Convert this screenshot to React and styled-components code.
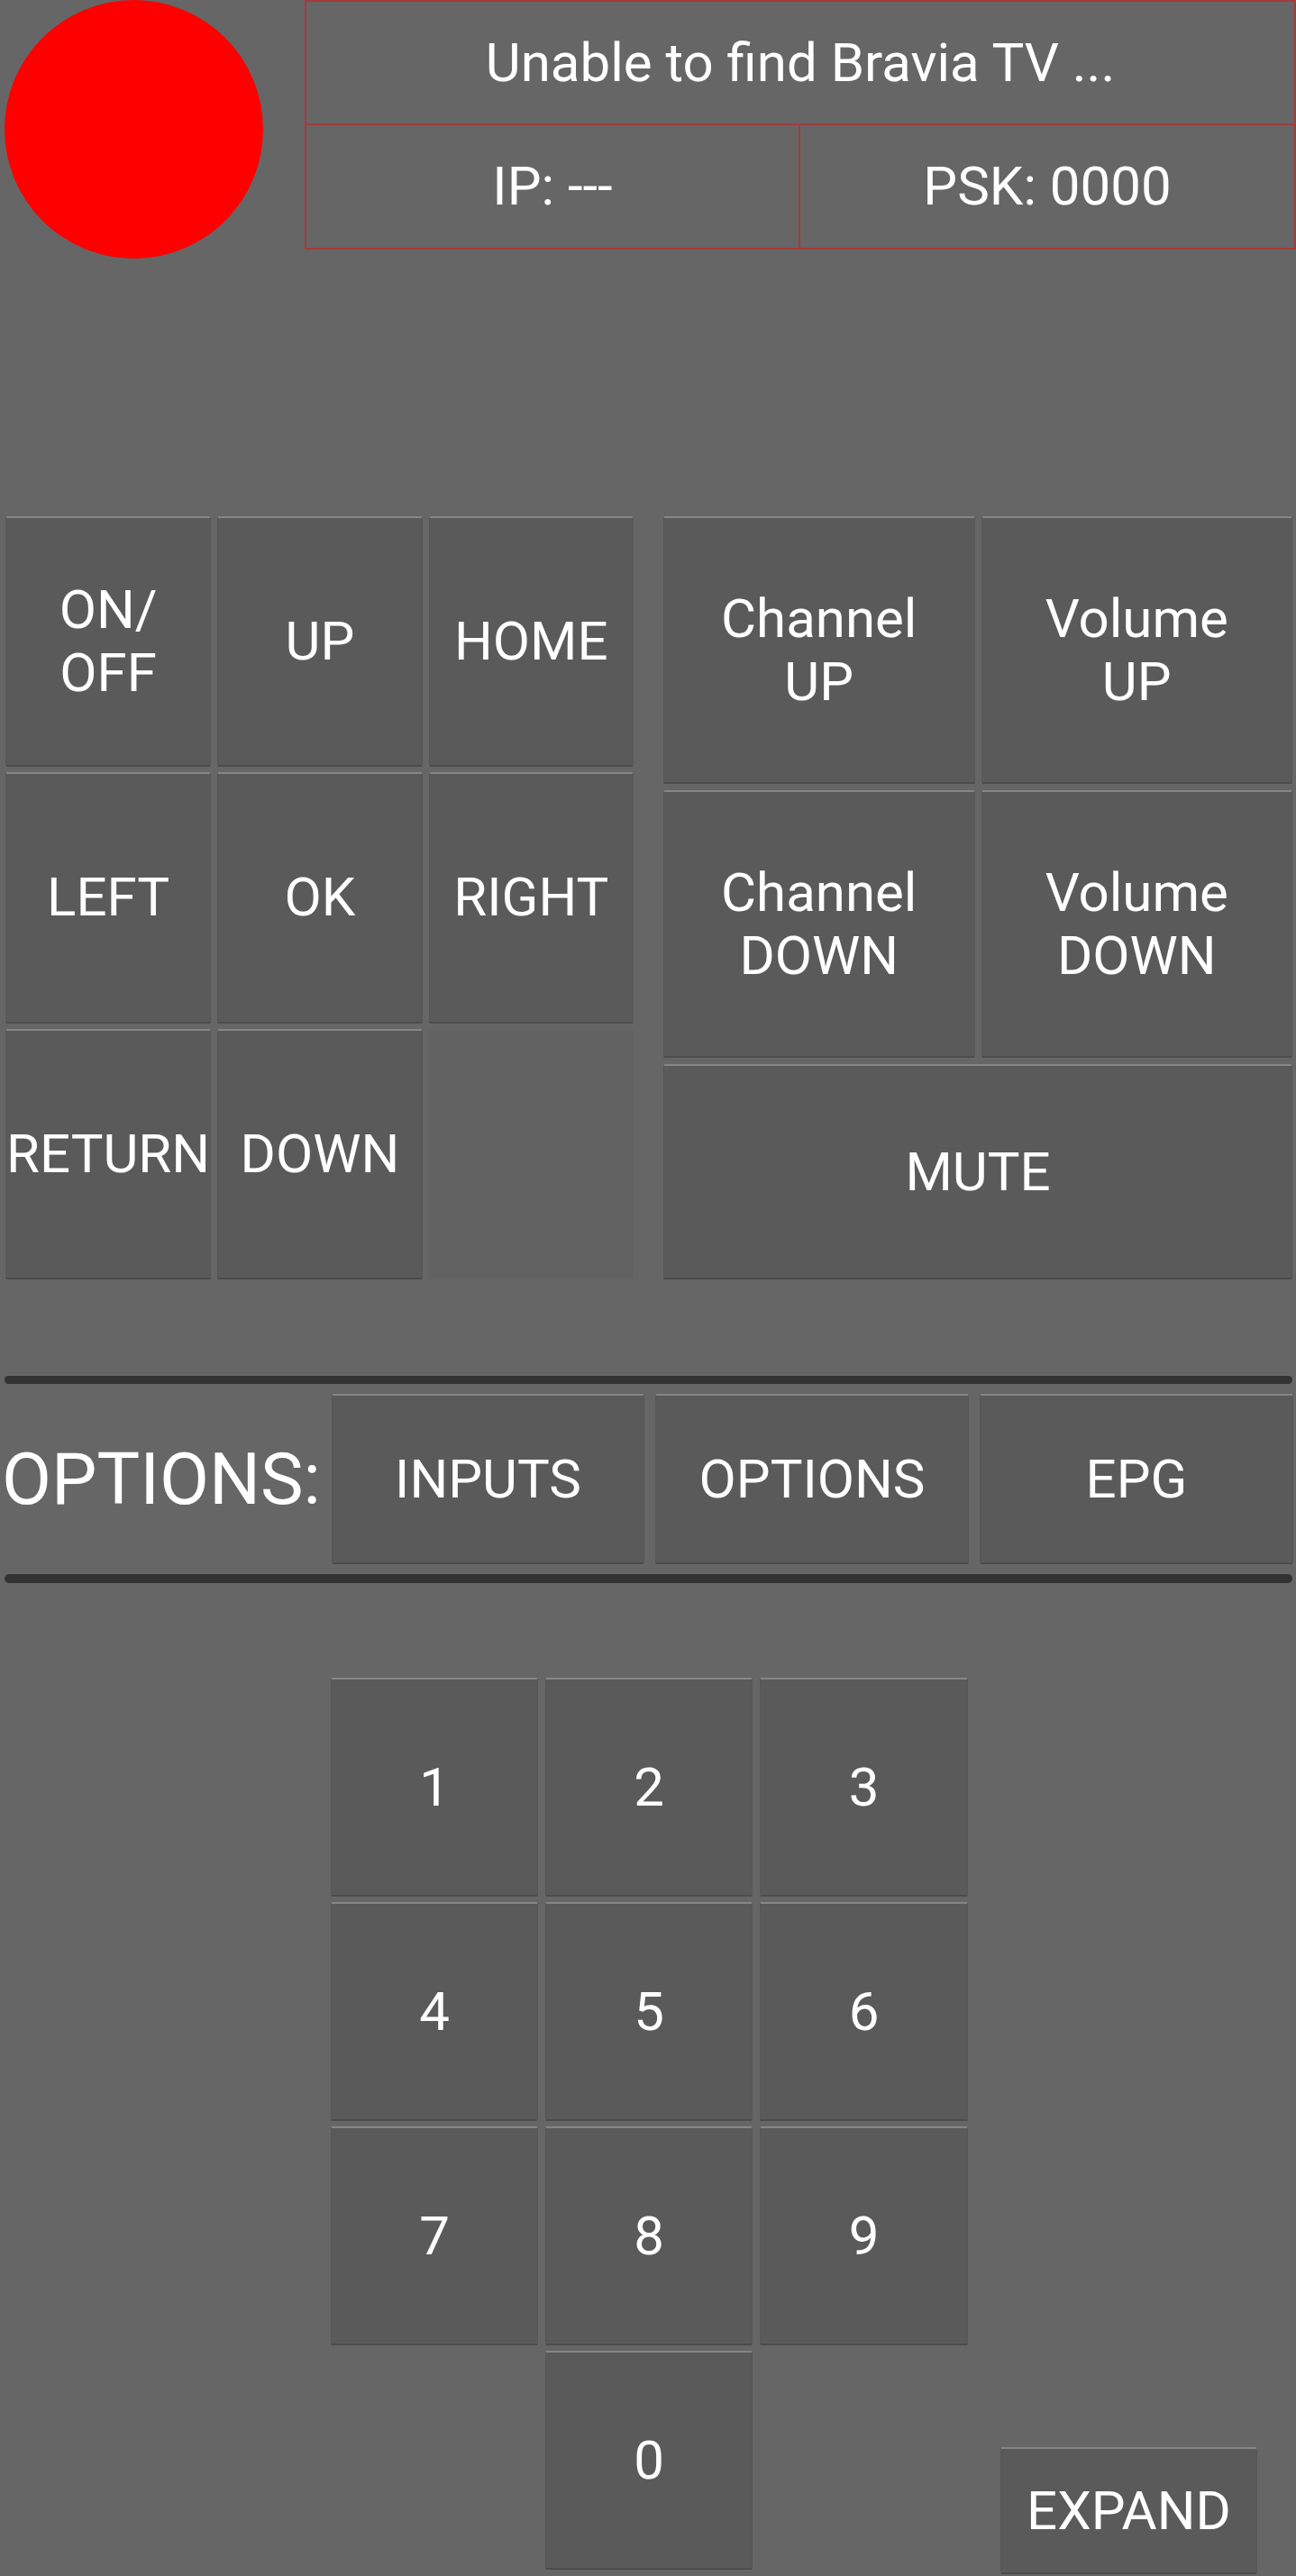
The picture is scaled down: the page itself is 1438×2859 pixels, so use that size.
import React from "react";
import styled, { createGlobalStyle } from "styled-components";

const GlobalStyle = createGlobalStyle`
	html, body {
		margin: 0;
		padding: 0;
		background: #666666;
	}
	body {
		font-family: Roboto, "Liberation Sans", sans-serif;
		color: #ffffff;
	}
	* {
		box-sizing: border-box;
	}
`;

const Screen = styled.div`
	width: 1438px;
	min-height: 2859px;
	background: #666666;
	overflow: hidden;
`;

const Header = styled.div`
	display: flex;
	align-items: flex-start;
	gap: 46px;
	padding-left: 5px;
`;

const StatusLight = styled.div`
	width: 287px;
	height: 287px;
	border-radius: 50%;
	background: #ff0000;
	flex-shrink: 0;
`;

const InfoBox = styled.div`
	width: 1100px;
	height: 277px;
	display: grid;
	grid-template-columns: 1fr 1fr;
	grid-template-rows: 1fr 1fr;
	border: 2px solid #a63a3a;
`;

const InfoCell = styled.div`
	display: flex;
	align-items: center;
	justify-content: center;
	font-size: 60px;
	grid-column: ${p => (p.wide ? "1 / span 2" : "auto")};
	border-bottom: ${p => (p.wide ? "2px solid #a63a3a" : "none")};
	border-right: ${p => (p.divider ? "2px solid #a63a3a" : "none")};
`;

const Controls = styled.div`
	display: flex;
	gap: 33px;
	margin-top: 286px;
	padding-left: 6px;
	height: 847px;
`;

const NavGrid = styled.div`
	width: 697px;
	display: grid;
	grid-template-columns: repeat(3, 1fr);
	grid-template-rows: repeat(3, 1fr);
	column-gap: 7px;
	row-gap: 6px;
`;

const TvGrid = styled.div`
	width: 698px;
	display: grid;
	grid-template-columns: 1fr 1fr;
	grid-template-rows: 297px 297px 1fr;
	gap: 7px;
`;

const Key = styled.button`
	display: flex;
	flex-direction: column;
	align-items: center;
	justify-content: center;
	padding: 0;
	margin: 0;
	background: #5a5a5a;
	color: #ffffff;
	font-family: Roboto, "Liberation Sans", sans-serif;
	font-size: 60px;
	line-height: 70px;
	border: none;
	border-top: 2px solid #868686;
	border-left: 1px solid #575757;
	border-right: 1px solid #575757;
	border-bottom: 2px solid #4c4c4c;
	border-radius: 2px;
	white-space: nowrap;
	grid-column: ${p => (p.span ? `span ${p.span}` : p.col || "auto")};
	grid-row: ${p => p.row || "auto"};
`;

const BlankKey = styled.div`
	background: #626262;
	border-top: 2px solid #656565;
	border-radius: 2px;
`;

const Divider = styled.div`
	height: ${p => p.h || 9}px;
	margin: ${p => p.top}px 4px 0 5px;
	background: #333333;
	border-radius: 5px;
`;

const OptionsRow = styled.div`
	display: grid;
	grid-template-columns: 1fr 347px 348px 348px;
	column-gap: 12px;
	height: 189px;
	margin-top: 11px;
	padding: 0 4px 0 2px;
`;

const OptionsLabel = styled.div`
	display: flex;
	align-items: center;
	font-size: 80px;
	white-space: nowrap;
`;

const Keypad = styled.div`
	display: grid;
	grid-template-columns: 359px 230px 230px 231px 1fr;
	grid-template-rows: repeat(4, 243px);
	column-gap: 8px;
	row-gap: 6px;
	margin-top: 105px;
`;

const ExpandKey = styled(Key)`
	grid-column: 5;
	grid-row: 4;
	justify-self: end;
	align-self: end;
	width: 285px;
	height: 141px;
	margin-right: 43px;
	margin-bottom: -5px;
`;

const Label = ({ lines }) => lines.map(l => <span key={l}>{l}</span>);

const App = () => {
	const digits = ["1", "2", "3", "4", "5", "6", "7", "8", "9"];

	return (
		<Screen>
			<GlobalStyle />
			<Header>
				<StatusLight />
				<InfoBox>
					<InfoCell wide>Unable to find Bravia TV ...</InfoCell>
					<InfoCell divider>IP: ---</InfoCell>
					<InfoCell>PSK: 0000</InfoCell>
				</InfoBox>
			</Header>

			<Controls>
				<NavGrid>
					<Key><Label lines={["ON/", "OFF"]} /></Key>
					<Key>UP</Key>
					<Key>HOME</Key>
					<Key>LEFT</Key>
					<Key>OK</Key>
					<Key>RIGHT</Key>
					<Key>RETURN</Key>
					<Key>DOWN</Key>
					<BlankKey />
				</NavGrid>
				<TvGrid>
					<Key><Label lines={["Channel", "UP"]} /></Key>
					<Key><Label lines={["Volume", "UP"]} /></Key>
					<Key><Label lines={["Channel", "DOWN"]} /></Key>
					<Key><Label lines={["Volume", "DOWN"]} /></Key>
					<Key span={2}>MUTE</Key>
				</TvGrid>
			</Controls>

			<Divider top={107} />
			<OptionsRow>
				<OptionsLabel>OPTIONS:</OptionsLabel>
				<Key>INPUTS</Key>
				<Key>OPTIONS</Key>
				<Key>EPG</Key>
			</OptionsRow>
			<Divider top={11} h={10} />

			<Keypad>
				{digits.map((d, i) => (
					<Key key={d} col={(i % 3) + 2} row={Math.floor(i / 3) + 1}>
						{d}
					</Key>
				))}
				<Key col={3} row={4}>0</Key>
				<ExpandKey>EXPAND</ExpandKey>
			</Keypad>
		</Screen>
	);
};

export default App;
